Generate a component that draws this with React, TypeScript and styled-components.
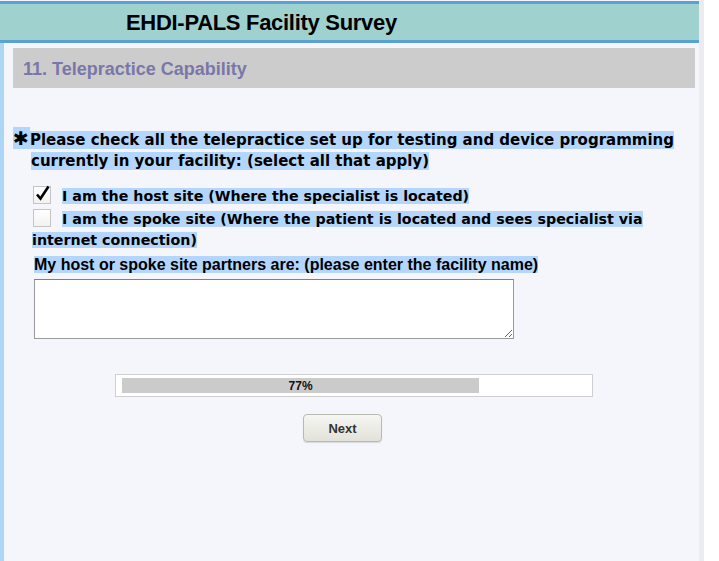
import React from "react";
import styled, { createGlobalStyle } from "styled-components";

const GlobalStyle = createGlobalStyle`
  html, body { margin: 0; padding: 0; background: #ffffff; }
  body { font-family: "Liberation Sans", Arial, sans-serif; }
`;

const Page = styled.div`
  width: 699px;
  min-height: 561px;
  border-right: 5px solid #ececf0;
  background: #f4f6fb;
  display: flex;
  flex-direction: column;
  box-sizing: content-box;
`;

const Header = styled.header`
  margin-top: 1px;
  height: 36px;
  border-top: 3px solid #5a9fd5;
  border-bottom: 3px solid #5a9fd5;
  background: #9fd2cf;
  display: flex;
  align-items: center;
  padding-left: 126px;
`;

const Title = styled.h1`
  margin: 0;
  padding-top: 2px;
  font-family: "Liberation Sans", Arial, sans-serif;
  font-size: 22px;
  font-weight: bold;
  color: #000;
  letter-spacing: -0.3px;
`;

const Body = styled.main`
  flex: 1;
  border-left: 4px solid #acd5f6;
  padding: 5px 4px 0 9px;
  display: flex;
  flex-direction: column;
`;

const SectionBar = styled.div`
  height: 40px;
  background: #cccccc;
  display: flex;
  align-items: center;
  padding-left: 10px;
`;

const SectionTitle = styled.h2`
  margin: 0;
  padding-top: 2px;
  font-size: 18px;
  font-weight: bold;
  color: #7a77a8;
`;

const Question = styled.div`
  margin-top: 40px;
  padding-left: 18px;
  text-indent: -18px;
  font-family: "DejaVu Sans", Verdana, sans-serif;
  font-size: 15px;
  font-weight: bold;
  line-height: 21px;
  color: #000;
  width: 670px;
`;

const Hl = styled.span`
  background: #b4d6fd;
`;

const Star = styled.span`
  background: #b4d6fd;
  font-size: 19px;
  padding-right: 1px;
`;

const Choices = styled.div`
  margin-top: 14px;
  padding-left: 19px;
  display: flex;
  flex-direction: column;
  gap: 2px;
  font-family: "DejaVu Sans", Verdana, sans-serif;
  font-size: 14.25px;
  font-weight: bold;
  line-height: 21px;
  width: 640px;
`;

const Choice = styled.div``;

const Box = styled.span<{ $checked?: boolean }>`
  display: inline-block;
  vertical-align: -3px;
  width: 18px;
  height: 18px;
  box-sizing: border-box;
  margin-left: 1px;
  border: 1px solid #c4c4c4;
  background: linear-gradient(#ffffff, #f2f2f2);
  margin-right: 11px;
  position: relative;
`;

const Tick = styled.svg`
  position: absolute;
  left: 1px;
  top: -2px;
`;

const FieldLabel = styled.div`
  margin-top: 4px;
  padding-left: 21px;
  font-family: "Liberation Sans", Arial, sans-serif;
  font-size: 16px;
  font-weight: bold;
  line-height: 20px;
`;

const TextArea = styled.textarea`
  margin: 4px 0 0 21px;
  width: 480px;
  height: 60px;
  box-sizing: border-box;
  border: 1px solid #9a9a9a;
  border-top-color: #808080;
  background: #fff;
  resize: both;
  display: block;
`;

const Progress = styled.div`
  margin: 35px 0 0 102px;
  width: 478px;
  height: 23px;
  box-sizing: border-box;
  border: 1px solid #cfcfcf;
  background: #fff;
  padding: 3px 6px;
`;

const Fill = styled.div`
  height: 15px;
  background: #cbcbcb;
  display: flex;
  align-items: center;
  justify-content: center;
  font-size: 12px;
  font-weight: bold;
  color: #111;
`;

const NextButton = styled.button`
  margin: 17px 0 0 290px;
  width: 79px;
  height: 28px;
  border: 1px solid #b9b9b2;
  border-radius: 4px;
  background: linear-gradient(#f6f6f2, #e2e2da);
  box-shadow: 0 1px 1px rgba(0,0,0,0.12);
  font-family: "Liberation Sans", Arial, sans-serif;
  font-size: 13px;
  font-weight: bold;
  color: #333;
  align-self: flex-start;
`;

function CheckBox({ checked }: { checked?: boolean }) {
  return (
    <Box $checked={checked}>
      {checked && (
        <Tick width="16" height="17" viewBox="0 0 16 17">
          <path d="M2 9.5 L5.5 13.5 L13.5 1.5" fill="none" stroke="#000" strokeWidth="2.6" strokeLinecap="butt" strokeLinejoin="miter" />
        </Tick>
      )}
    </Box>
  );
}

export default function App() {
  const pct = 77;
  return (
    <>
      <GlobalStyle />
      <Page>
        <Header>
          <Title>EHDI-PALS Facility Survey</Title>
        </Header>
        <Body>
          <SectionBar>
            <SectionTitle>11. Telepractice Capability</SectionTitle>
          </SectionBar>
          <Question>
            <Star>✱</Star>
            <Hl>Please check all the telepractice set up for testing and device programming currently in your facility: (select all that apply)</Hl>
          </Question>
          <Choices>
            <Choice>
              <CheckBox checked />
              <Hl>I am the host site (Where the specialist is located)</Hl>
            </Choice>
            <Choice>
              <CheckBox />
              <Hl>I am the spoke site (Where the patient is located and sees specialist via internet connection)</Hl>
            </Choice>
          </Choices>
          <FieldLabel>
            <Hl>My host or spoke site partners are: (please enter the facility name)</Hl>
          </FieldLabel>
          <TextArea />
          <Progress>
            <Fill style={{ width: `${pct}%` }}>{pct}%</Fill>
          </Progress>
          <NextButton>Next</NextButton>
        </Body>
      </Page>
    </>
  );
}
